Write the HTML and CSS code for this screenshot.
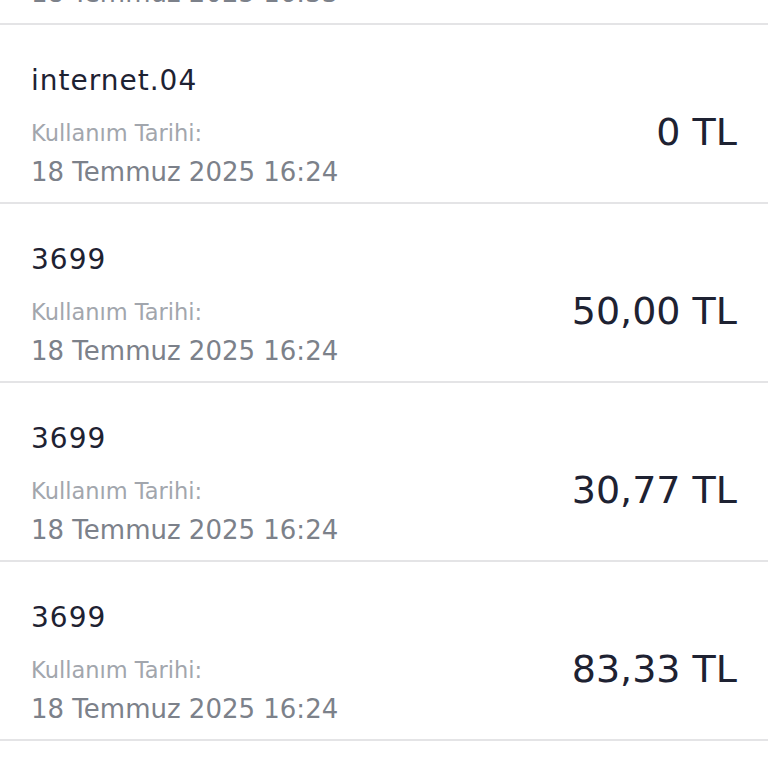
FILE: index.html
```html
<!DOCTYPE html>
<html lang="tr">
<head>
<meta charset="utf-8">
<link rel="stylesheet" href="styles.css">
</head>
<body>
<ul class="list">
  <li class="row">
    <div class="info">
      <div class="title">3699</div>
      <div class="label">Kullanım Tarihi:</div>
      <div class="date">18 Temmuz 2025 16:33</div>
    </div>
    <div class="amount">25,00 TL</div>
  </li>
  <li class="row">
    <div class="info">
      <div class="title">internet.04</div>
      <div class="label">Kullanım Tarihi:</div>
      <div class="date">18 Temmuz 2025 16:24</div>
    </div>
    <div class="amount">0 TL</div>
  </li>
  <li class="row">
    <div class="info">
      <div class="title">3699</div>
      <div class="label">Kullanım Tarihi:</div>
      <div class="date">18 Temmuz 2025 16:24</div>
    </div>
    <div class="amount">50,00 TL</div>
  </li>
  <li class="row">
    <div class="info">
      <div class="title">3699</div>
      <div class="label">Kullanım Tarihi:</div>
      <div class="date">18 Temmuz 2025 16:24</div>
    </div>
    <div class="amount">30,77 TL</div>
  </li>
  <li class="row">
    <div class="info">
      <div class="title">3699</div>
      <div class="label">Kullanım Tarihi:</div>
      <div class="date">18 Temmuz 2025 16:24</div>
    </div>
    <div class="amount">83,33 TL</div>
  </li>
</ul>
</body>
</html>
```
FILE: styles.css
```css
html, body {
  margin: 0;
  padding: 0;
  background: #ffffff;
  overflow: hidden;
}
body {
  font-family: "DejaVu Sans", "Noto Sans", sans-serif;
  height: 768px;
}
.list {
  list-style: none;
  margin: -154px 0 0 0;
  padding: 0;
}
.row {
  display: flex;
  justify-content: space-between;
  align-items: flex-start;
  height: 177px;
  padding: 0 31px;
  border-bottom: 2px solid #e4e4e6;
  box-sizing: content-box;
}
.info {
  display: flex;
  flex-direction: column;
  padding-top: 38px;
}
.title {
  font-size: 28px;
  line-height: 36px;
  letter-spacing: 1px;
  color: #1e2232;
}
.label {
  font-size: 22.5px;
  line-height: 30px;
  color: #a2a6ad;
  margin-top: 19px;
}
.date {
  font-size: 26px;
  line-height: 36px;
  color: #7c818a;
  margin-top: 6px;
}
.amount {
  font-size: 38px;
  line-height: 46px;
  color: #1e2232;
  padding-top: 84px;
}
```
